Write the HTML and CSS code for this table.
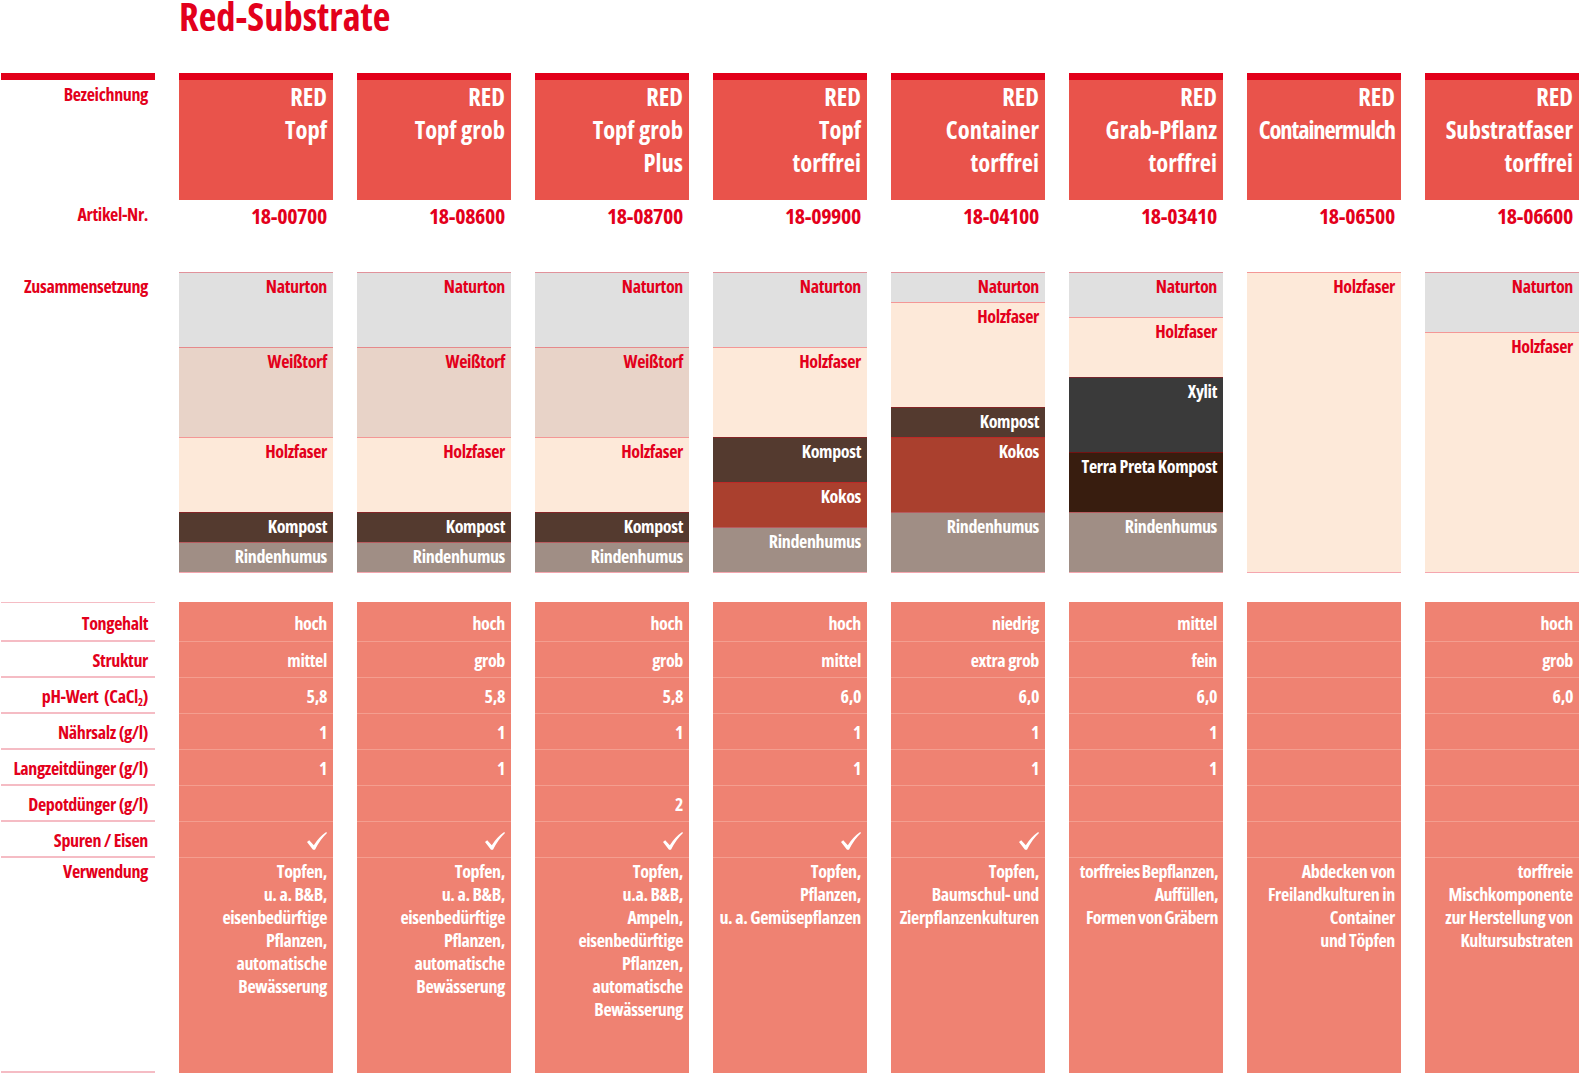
FILE: index.html
```html
<!DOCTYPE html>
<html lang="de">
<head>
<meta charset="utf-8">
<title>Red-Substrate</title>
<link rel="stylesheet" href="styles.css">
</head>
<body>
<div class="page">
  <h1 class="title">Red-Substrate</h1>
  <div class="table">
    <div class="col labels">
      <div class="hd">Bezeichnung</div>
      <div class="art">Artikel-Nr.</div>
      <div class="comp comp-label">Zusammensetzung</div>
      <div class="props">
        <div class="row first">Tongehalt</div>
        <div class="row">Struktur</div>
        <div class="row">pH-Wert&nbsp; (CaCl<sub>2</sub>)</div>
        <div class="row">Nährsalz (g/l)</div>
        <div class="row">Langzeitdünger (g/l)</div>
        <div class="row">Depotdünger (g/l)</div>
        <div class="row">Spuren / Eisen</div>
        <div class="use">Verwendung</div>
      </div>
    </div>

    <div class="col product">
      <div class="hd">RED<br>Topf</div>
      <div class="art">18-00700</div>
      <div class="comp">
        <div class="layer naturton" style="height:25%">Naturton</div>
        <div class="layer weisstorf" style="height:30%">Weißtorf</div>
        <div class="layer holzfaser" style="height:25%">Holzfaser</div>
        <div class="layer kompost" style="height:10%">Kompost</div>
        <div class="layer rinde" style="height:10%">Rindenhumus</div>
      </div>
      <div class="props">
        <div class="row first">hoch</div>
        <div class="row">mittel</div>
        <div class="row">5,8</div>
        <div class="row">1</div>
        <div class="row">1</div>
        <div class="row"></div>
        <div class="row"><svg class="check" viewBox="0 0 20 18"><path d="M0 10 L2.2 8.3 L6.8 13.2 Q11.8 5.2 19.2 0 L20 1 Q13 7.5 8 17.8 L6 17.8 Z"/></svg></div>
        <div class="use">Topfen,<br>u. a. B&amp;B,<br>eisenbedürftige<br>Pflanzen,<br>automatische<br>Bewässerung</div>
      </div>
    </div>

    <div class="col product">
      <div class="hd">RED<br>Topf grob</div>
      <div class="art">18-08600</div>
      <div class="comp">
        <div class="layer naturton" style="height:25%">Naturton</div>
        <div class="layer weisstorf" style="height:30%">Weißtorf</div>
        <div class="layer holzfaser" style="height:25%">Holzfaser</div>
        <div class="layer kompost" style="height:10%">Kompost</div>
        <div class="layer rinde" style="height:10%">Rindenhumus</div>
      </div>
      <div class="props">
        <div class="row first">hoch</div>
        <div class="row">grob</div>
        <div class="row">5,8</div>
        <div class="row">1</div>
        <div class="row">1</div>
        <div class="row"></div>
        <div class="row"><svg class="check" viewBox="0 0 20 18"><path d="M0 10 L2.2 8.3 L6.8 13.2 Q11.8 5.2 19.2 0 L20 1 Q13 7.5 8 17.8 L6 17.8 Z"/></svg></div>
        <div class="use">Topfen,<br>u. a. B&amp;B,<br>eisenbedürftige<br>Pflanzen,<br>automatische<br>Bewässerung</div>
      </div>
    </div>

    <div class="col product">
      <div class="hd">RED<br>Topf grob<br>Plus</div>
      <div class="art">18-08700</div>
      <div class="comp">
        <div class="layer naturton" style="height:25%">Naturton</div>
        <div class="layer weisstorf" style="height:30%">Weißtorf</div>
        <div class="layer holzfaser" style="height:25%">Holzfaser</div>
        <div class="layer kompost" style="height:10%">Kompost</div>
        <div class="layer rinde" style="height:10%">Rindenhumus</div>
      </div>
      <div class="props">
        <div class="row first">hoch</div>
        <div class="row">grob</div>
        <div class="row">5,8</div>
        <div class="row">1</div>
        <div class="row"></div>
        <div class="row">2</div>
        <div class="row"><svg class="check" viewBox="0 0 20 18"><path d="M0 10 L2.2 8.3 L6.8 13.2 Q11.8 5.2 19.2 0 L20 1 Q13 7.5 8 17.8 L6 17.8 Z"/></svg></div>
        <div class="use">Topfen,<br>u.a. B&amp;B,<br>Ampeln,<br>eisenbedürftige<br>Pflanzen,<br>automatische<br>Bewässerung</div>
      </div>
    </div>

    <div class="col product">
      <div class="hd">RED<br>Topf<br>torffrei</div>
      <div class="art">18-09900</div>
      <div class="comp">
        <div class="layer naturton" style="height:25%">Naturton</div>
        <div class="layer holzfaser" style="height:30%">Holzfaser</div>
        <div class="layer kompost" style="height:15%">Kompost</div>
        <div class="layer kokos" style="height:15%">Kokos</div>
        <div class="layer rinde" style="height:15%">Rindenhumus</div>
      </div>
      <div class="props">
        <div class="row first">hoch</div>
        <div class="row">mittel</div>
        <div class="row">6,0</div>
        <div class="row">1</div>
        <div class="row">1</div>
        <div class="row"></div>
        <div class="row"><svg class="check" viewBox="0 0 20 18"><path d="M0 10 L2.2 8.3 L6.8 13.2 Q11.8 5.2 19.2 0 L20 1 Q13 7.5 8 17.8 L6 17.8 Z"/></svg></div>
        <div class="use">Topfen,<br>Pflanzen,<br>u. a. Gemüsepflanzen</div>
      </div>
    </div>

    <div class="col product">
      <div class="hd">RED<br>Container<br>torffrei</div>
      <div class="art">18-04100</div>
      <div class="comp">
        <div class="layer naturton" style="height:10%">Naturton</div>
        <div class="layer holzfaser" style="height:35%">Holzfaser</div>
        <div class="layer kompost" style="height:10%">Kompost</div>
        <div class="layer kokos" style="height:25%">Kokos</div>
        <div class="layer rinde" style="height:20%">Rindenhumus</div>
      </div>
      <div class="props">
        <div class="row first">niedrig</div>
        <div class="row">extra grob</div>
        <div class="row">6,0</div>
        <div class="row">1</div>
        <div class="row">1</div>
        <div class="row"></div>
        <div class="row"><svg class="check" viewBox="0 0 20 18"><path d="M0 10 L2.2 8.3 L6.8 13.2 Q11.8 5.2 19.2 0 L20 1 Q13 7.5 8 17.8 L6 17.8 Z"/></svg></div>
        <div class="use">Topfen,<br>Baumschul- und<br>Zierpflanzenkulturen</div>
      </div>
    </div>

    <div class="col product">
      <div class="hd">RED<br>Grab-Pflanz<br>torffrei</div>
      <div class="art">18-03410</div>
      <div class="comp">
        <div class="layer naturton" style="height:15%">Naturton</div>
        <div class="layer holzfaser" style="height:20%">Holzfaser</div>
        <div class="layer xylit" style="height:25%">Xylit</div>
        <div class="layer terra" style="height:20%">Terra Preta Kompost</div>
        <div class="layer rinde" style="height:20%">Rindenhumus</div>
      </div>
      <div class="props">
        <div class="row first">mittel</div>
        <div class="row">fein</div>
        <div class="row">6,0</div>
        <div class="row">1</div>
        <div class="row">1</div>
        <div class="row"></div>
        <div class="row"></div>
        <div class="use tight">torffreies Bepflanzen,<br>Auffüllen,<br>Formen von Gräbern</div>
      </div>
    </div>

    <div class="col product">
      <div class="hd">RED<br><span class="squeeze">Containermulch</span></div>
      <div class="art">18-06500</div>
      <div class="comp">
        <div class="layer holzfaser" style="height:100%">Holzfaser</div>
      </div>
      <div class="props">
        <div class="row first"></div>
        <div class="row"></div>
        <div class="row"></div>
        <div class="row"></div>
        <div class="row"></div>
        <div class="row"></div>
        <div class="row"></div>
        <div class="use">Abdecken von<br>Freilandkulturen in<br>Container<br>und Töpfen</div>
      </div>
    </div>

    <div class="col product">
      <div class="hd">RED<br>Substratfaser<br>torffrei</div>
      <div class="art">18-06600</div>
      <div class="comp">
        <div class="layer naturton" style="height:20%">Naturton</div>
        <div class="layer holzfaser" style="height:80%">Holzfaser</div>
      </div>
      <div class="props">
        <div class="row first">hoch</div>
        <div class="row">grob</div>
        <div class="row">6,0</div>
        <div class="row"></div>
        <div class="row"></div>
        <div class="row"></div>
        <div class="row"></div>
        <div class="use">torffreie<br>Mischkomponente<br>zur Herstellung von<br>Kultursubstraten</div>
      </div>
    </div>
  </div>
</div>
</body>
</html>
```
FILE: styles.css
```css
* { box-sizing: border-box; }

html, body {
  margin: 0;
  padding: 0;
  background: #ffffff;
}

body {
  font-family: "Open Sans", "Roboto", "Liberation Sans", sans-serif;
  font-stretch: 75%;
  font-weight: 700;
  font-size: 18px;
  letter-spacing: -0.02em;
  color: #e3001b;
}

.page {
  padding-left: 1px;
  width: 1585px;
}

.title {
  margin: 0 0 0 178px;
  height: 73px;
  font-size: 38.5px;
  line-height: 33px;
  font-weight: 700;
  color: #e3001b;
  letter-spacing: 0;
}

.table {
  display: flex;
  gap: 24px;
}

.col {
  width: 154px;
  flex: 0 0 154px;
  display: flex;
  flex-direction: column;
  text-align: right;
}

/* Header */
.hd {
  height: 127px;
  border-top: 7px solid #e2001a;
  padding: 0 6px 0 0;
  font-size: 24.5px;
  line-height: 33px;
  letter-spacing: 0;
  color: #ffffff;
  background: #e9534b;
  white-space: nowrap;
}

.squeeze {
  letter-spacing: -0.045em;
}

.labels .hd {
  background: transparent;
  color: #e3001b;
  font-size: 18px;
  line-height: 22px;
  padding: 3px 7px 0 0;
  letter-spacing: -0.02em;
}

/* Article numbers */
.art {
  height: 72px;
  padding: 2px 6px 0 0;
  font-size: 22px;
  line-height: 26px;
}

.labels .art {
  font-size: 18px;
  line-height: 22px;
  padding: 3px 7px 0 0;
}

/* Composition */
.comp {
  height: 301px;
  display: flex;
  flex-direction: column;
  border-bottom: 1px solid rgba(226, 0, 26, 0.35);
}

.comp-label {
  border-bottom: 0;
  padding: 3px 7px 0 0;
  font-size: 18px;
  line-height: 22px;
}

.layer {
  flex: 0 0 auto;
  border-top: 1px solid rgba(226, 0, 26, 0.35);
  padding: 2px 6px 0 0;
  line-height: 22px;
  white-space: nowrap;
}

.naturton  { background: #e0e0e0; color: #e3001b; }
.weisstorf { background: #e8d3c8; color: #e3001b; }
.holzfaser { background: #fde9d9; color: #e3001b; }
.kompost   { background: #543a2f; color: #ffffff; }
.rinde     { background: #a08e85; color: #ffffff; }
.kokos     { background: #aa402e; color: #ffffff; }
.xylit     { background: #3a3a3a; color: #ffffff; }
.terra     { background: #381d0f; color: #ffffff; }

/* Properties */
.props {
  margin-top: 29px;
  height: 471px;
  display: flex;
  flex-direction: column;
  background: #ef8272;
  color: #ffffff;
}

.row {
  height: 36px;
  flex: 0 0 36px;
  padding: 7px 6px 0 0;
  line-height: 22px;
  border-bottom: 1px solid #f49e8f;
  white-space: nowrap;
}

.row.first {
  height: 40px;
  flex-basis: 40px;
  padding-top: 10px;
}

.use {
  flex: 1 1 auto;
  padding: 2px 6px 0 0;
  line-height: 23px;
  white-space: nowrap;
}

.use.tight {
  word-spacing: -0.5px;
  letter-spacing: -0.03em;
  padding-right: 5px;
}

.labels .props {
  background: transparent;
  color: #e3001b;
  border-top: 1px solid #f5bcc4;
  font-size: 18px;
}

.labels .row {
  border-bottom: 2px solid #f5bcc4;
  padding-right: 7px;
}

.labels .row.first {
  height: 39px;
  flex-basis: 39px;
  padding-top: 9px;
}

.labels .use {
  border-bottom: 2px solid #f5bcc4;
  padding-right: 7px;
}

sub {
  font-size: 0.6em;
  line-height: 0;
  vertical-align: -0.25em;
}

.check {
  width: 20px;
  height: 18px;
  margin-top: 3px;
  fill: #ffffff;
  display: inline-block;
  vertical-align: top;
}
```
